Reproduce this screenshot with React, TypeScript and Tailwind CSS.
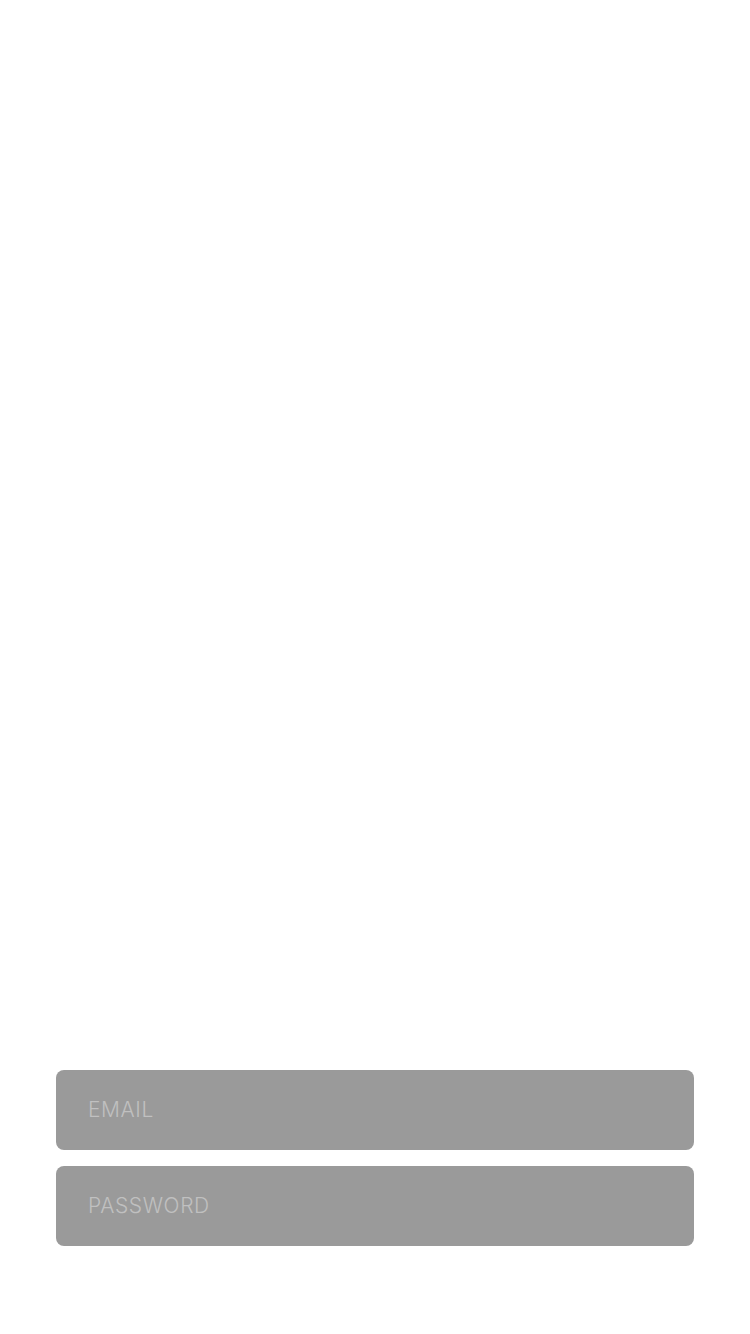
export default function App() {
  return (
    <div className="flex min-h-[1334px] w-full flex-col justify-end bg-white px-[56px] pb-[88px]">
      <form className="flex flex-col gap-4" onSubmit={(e) => e.preventDefault()}>
        <input
          type="email"
          placeholder="EMAIL"
          className="h-20 w-full rounded-lg bg-[#9a9a9a] px-8 pb-[2px] font-['Inter',sans-serif] text-[21px] font-light tracking-[0.6px] text-white outline-none placeholder:text-[#c0c0c0]"
        />
        <input
          type="password"
          placeholder="PASSWORD"
          className="h-20 w-full rounded-lg bg-[#9a9a9a] px-8 pb-[2px] font-['Inter',sans-serif] text-[21px] font-light tracking-[0.6px] text-white outline-none placeholder:text-[#c0c0c0]"
        />
      </form>
    </div>
  );
}
